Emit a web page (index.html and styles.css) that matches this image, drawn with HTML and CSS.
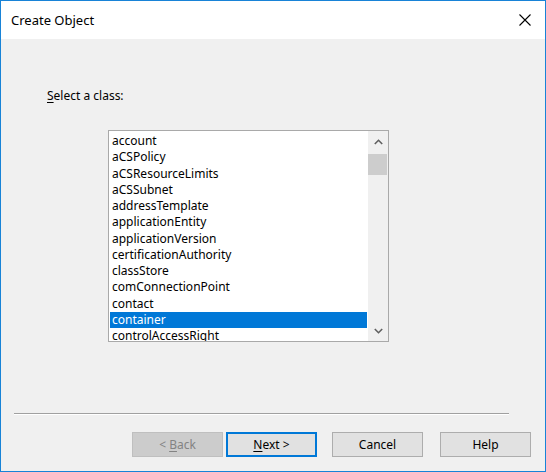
FILE: index.html
```html
<!DOCTYPE html>
<html>
<head>
<meta charset="utf-8">
<link rel="stylesheet" href="styles.css">
</head>
<body>
<div class="window">
  <div class="titlebar">
    <span class="title">Create Object</span>
    <span class="close">
      <svg width="12" height="12" viewBox="0 0 12 12"><path d="M0.5 0.5 L11.5 11.5 M11.5 0.5 L0.5 11.5" stroke="#000" stroke-width="1.1" fill="none"/></svg>
    </span>
  </div>
  <div class="body">
    <div class="label"><u>S</u>elect a class:</div>
    <div class="listbox">
      <div class="items">
        <div class="item">account</div>
        <div class="item">aCSPolicy</div>
        <div class="item">aCSResourceLimits</div>
        <div class="item">aCSSubnet</div>
        <div class="item">addressTemplate</div>
        <div class="item">applicationEntity</div>
        <div class="item">applicationVersion</div>
        <div class="item">certificationAuthority</div>
        <div class="item">classStore</div>
        <div class="item">comConnectionPoint</div>
        <div class="item">contact</div>
        <div class="item selected">container</div>
        <div class="item">controlAccessRight</div>
      </div>
      <div class="scrollbar">
        <div class="arrow">
          <svg width="9" height="6" viewBox="0 0 9 6"><path d="M0.8 5 L4.5 1.3 L8.2 5" stroke="#606060" stroke-width="1.6" fill="none"/></svg>
        </div>
        <div class="track"><div class="thumb"></div></div>
        <div class="arrow">
          <svg width="9" height="6" viewBox="0 0 9 6"><path d="M0.8 1 L4.5 4.7 L8.2 1" stroke="#606060" stroke-width="1.6" fill="none"/></svg>
        </div>
      </div>
    </div>
    <div class="separator"></div>
    <div class="buttons">
      <button class="btn disabled">&lt; <u>B</u>ack</button>
      <button class="btn default"><u>N</u>ext &gt;</button>
      <button class="btn cancel">Cancel</button>
      <button class="btn help">Help</button>
    </div>
  </div>
</div>
</body>
</html>
```

FILE: styles.css
```css
html, body {
  margin: 0;
  padding: 0;
  background: #f0f0f0;
}
.window {
  width: 546px;
  height: 472px;
  box-sizing: border-box;
  border: 1px solid #1883d7;
  display: flex;
  flex-direction: column;
  background: #f0f0f0;
  font-family: "Noto Sans", "Open Sans", sans-serif;
  font-size: 12px;
  color: #000;
  overflow: hidden;
}
.titlebar {
  height: 38px;
  flex: none;
  background: #fff;
  display: flex;
  align-items: center;
  justify-content: space-between;
  padding-left: 10px;
}
.title {
  font-size: 13px;
  line-height: 16px;
  margin-top: 0px;
}
.close {
  width: 46px;
  height: 38px;
  display: flex;
  align-items: center;
  justify-content: center;
  margin-right: 0px;
}
.close svg { display: block; margin-left: 6px; margin-top: -1px; }
.body {
  flex: 1;
  display: flex;
  flex-direction: column;
}
.label {
  margin-top: 49px;
  margin-left: 46px;
  line-height: 16px;
  height: 16px;
}
.label u, .btn u { text-decoration: underline; text-underline-offset: 2px; }
.listbox {
  margin-top: 26px;
  margin-left: 107px;
  width: 281px;
  height: 212px;
  box-sizing: border-box;
  border: 1px solid #a9a9a9;
  background: #fff;
  display: flex;
  overflow: hidden;
}
.items {
  flex: 1;
  padding: 2px 1px 0 1px;
  overflow: hidden;
}
.item {
  height: 16.27px;
  line-height: 16.27px;
  padding-left: 2px;
  white-space: nowrap;
}
.item.selected {
  background: #0078d7;
  color: #fff;
}
.scrollbar {
  width: 20px;
  flex: none;
  background: #f0f0f0;
  display: flex;
  flex-direction: column;
}
.arrow {
  height: 21px;
  flex: none;
  display: flex;
  align-items: center;
  justify-content: center;
}
.arrow svg { display: block; }
.track {
  flex: 1;
  padding-top: 2px;
}
.thumb {
  height: 21px;
  background: #cdcdcd;
  margin: 0 1px 0 0;
}
.separator {
  margin-top: 71px;
  margin-left: 13px;
  width: 495px;
  height: 1px;
  background: #a0a0a0;
  border-bottom: 1px solid #fff;
}
.buttons {
  margin-top: 17px;
  margin-left: 131px;
  display: flex;
}
.btn {
  width: 91px;
  height: 25px;
  box-sizing: border-box;
  border: 1px solid #adadad;
  background: #e1e1e1;
  font-family: "Noto Sans", "Open Sans", sans-serif;
  font-size: 12px;
  color: #000;
  padding: 0;
  margin: 0;
  line-height: 16px;
}
.btn.disabled {
  background: #cccccc;
  border-color: #bfbfbf;
  color: #838383;
}
.btn.default {
  margin-left: 3px;
  border-color: #0078d7;
  box-shadow: inset 0 0 0 1px #0078d7;
}
.btn.cancel { margin-left: 15px; }
.btn.help { margin-left: 17px; }
```
